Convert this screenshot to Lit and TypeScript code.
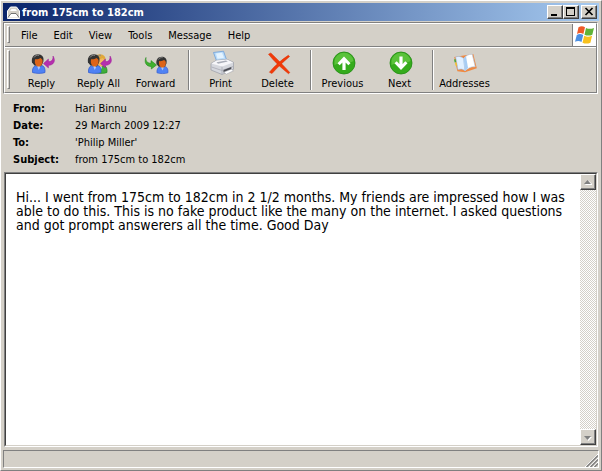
import { LitElement, html, css, svg, nothing } from "lit";
import { customElement, property } from "lit/decorators.js";

const person = (hair: string, face: string, coat: string, edge: string) => svg`
  <path d="M4.5 22.5c-.4-3.6 1-6.300 3-6.800l3.200 2 3.300-2.200c2.300.6 3.400 3.200 3 7-2.700 1.200-9.600 1.200-12.500 0z" fill=${coat} stroke=${edge} stroke-width=".7"/>
  <path d="M9.300 17l1.500 3 1.400-3z" fill="#a9c4ff"/>
  <path d="M4 12.500C3 7.500 5.800 4.300 10 4.300c4 0 6.300 2.900 5.300 7.400l-1.600 3.800H6.500z" fill=${hair}/>
  <path d="M7 9.200c1.800.4 4.200-.2 5.400-1.200 1.600.8 2.400 1.800 2.200 3.600-.2 3-1.900 5-3.900 5-2.200 0-3.700-2-3.900-4.600z" fill=${face}/>
  <path d="M6 7.500C7 5.600 9 5 11 5.300" fill="none" stroke="#8b8b8b" stroke-width="1"/>`;

const man = person("#333", "#dd6418", "#4f82f4", "#2f58cc");

const backArrow = svg`<path d="M25 6c3.300 5.200.3 9.300-4.600 9.300v2.600L15.500 13.600 20.400 9v2.600c3.400.2 4.900-2 4.600-5.600z" fill="#b52fae" stroke="#9a1c96" stroke-width=".5"/>`;

const icons: Record<string, unknown> = {
  reply: svg`${man}${backArrow}`,
  replyAll: svg`
    <g transform="translate(5 0)">${person("#e0a83c", "#f0b860", "#3fae3a", "#1f8a22")}</g>
    <g transform="translate(-1 0)">${man}</g>${backArrow}`,
  forward: svg`
    <g transform="translate(11 3) scale(.88)">${man}</g>
    <path d="M4 7.500c-.6 3.500 1.300 5.700 5 5.800v-2.700l5.500 4.400-5.200 4v-2.500C4.500 16.700 1.700 12.500 4 7.500z" fill="#3fb02f" stroke="#258a1c" stroke-width=".6"/>`,
  print: svg`
    <path d="M6.500 2.500l10-1.300 3.200 9-9.700 2z" fill="#b9dcfb" stroke="#6f9fd8" stroke-width=".8"/>
    <path d="M9 3.500l6-.8 2 5-6.500 1z" fill="#e4f3ff"/>
    <path d="M4 13.500l5.500-3.200 10.500-1 6.500 3v7L15 24.500 4 20z" fill="#d5d7dd" stroke="#9a9ca6" stroke-width=".7"/>
    <path d="M4.300 13.500l5.400-3 10.300-1 6.200 2.900-11 4.200z" fill="#f6f6f9"/>
    <path d="M9.500 12.200l9.500-1.700 1.800 1-9.800 2.200z" fill="#a9adb8"/>
    <path d="M15 16.700v7.500M4.500 17l10.500 3.500 11-4" fill="none" stroke="#a9abb5" stroke-width=".8"/>
    <path d="M16.500 20l7.800-3v2.500l-7.800 3z" fill="#4a4b52"/>
    <path d="M17 22l7.300-2.800 2.200 1.600-7.200 3.400z" fill="#fff" stroke="#9a9ca6" stroke-width=".5"/>`,
  remove: svg`
    <path d="M4.500 4.200L6.800 3c6 5.500 12.500 12.500 19 19.500l-1.300 1.200C18 18.500 10.500 12 4.500 4.200z" fill="#f23a08" stroke="#d82c00" stroke-width=".5"/>
    <path d="M24.300 5.300l1.300 1.200C19 12 13.500 17.500 8 23.500l-2.600-1.300C11 15.500 17.500 9.800 24.300 5.300z" fill="#f23a08" stroke="#d82c00" stroke-width=".5"/>`,
  previous: svg`
    <circle cx="15" cy="13" r="11" fill="#35ab1c" stroke="#1f8a12" stroke-width=".8"/>
    <path d="M5.500 11a9.600 9.600 0 0 1 19 0c-5 3.500-13 1-19 4z" fill="#6fce4c" opacity=".65"/>
    <path d="M15 6.500l6.500 6.700-2.200 2-2.700-2.700V20h-3.200v-7.500l-2.700 2.700-2.200-2z" fill="#fff"/>`,
  next: svg`
    <circle cx="15" cy="13" r="11" fill="#35ab1c" stroke="#1f8a12" stroke-width=".8"/>
    <path d="M5.500 11a9.600 9.600 0 0 1 19 0c-5 3.500-13 1-19 4z" fill="#6fce4c" opacity=".65"/>
    <path d="M15 20l6.500-6.700-2.200-2-2.700 2.700V6.500h-3.200V14l-2.700-2.700-2.200 2z" fill="#fff"/>`,
  addresses: svg`
    <path d="M3.200 7l3.200 14.300 7.600.9 11.800-4L22.300 4z" fill="#ee8a44"/>
    <path d="M4.700 7c3-1.200 5.800-.6 8 1.600l1.300 12.200c-2-1.800-4.300-2.200-7-1.200z" fill="#e2f0ff" stroke="#9cc0e8" stroke-width=".6"/>
    <path d="M12.700 8.600c2-3 5-4.400 8.500-4.400l3 12.500c-4-.4-7.200 1.300-10.200 4.100z" fill="#fff" stroke="#a9c8ea" stroke-width=".6"/>
    <path d="M12.700 8.600l1.300 12.200 3-3-2-11.500z" fill="#a8cdf4"/>
    <path d="M3 9.500l1.500-.4.700 3-1.500.4z" fill="#4aa83c"/><path d="M4 13l1.500-.4.700 3-1.500.4z" fill="#f2c430"/>`,
};

@customElement("tool-button")
class ToolButton extends LitElement {
  @property() icon = "";
  @property() label = "";
  static styles = css`
    .tool {
      display: flex;
      flex-direction: column;
      align-items: center;
      gap: 1px;
      width: 57px;
      height: 44px;
      padding: 2px 0 0;
      border: 0;
      background: none;
      font: 11px/14px "DejaVu Sans Condensed", Tahoma, sans-serif;
      color: #000;
      white-space: nowrap;
    }
    .icon { display: block; flex: none; width: 28px; height: 26px; }
  `;
  render() {
    return html`<button class="tool" type="button">
      <svg class="icon" viewBox="0 0 28 26" aria-hidden="true">${icons[this.icon]}</svg>
      <span>${this.label}</span>
    </button>`;
  }
}

const menus = ["File", "Edit", "View", "Tools", "Message", "Help"];
const toolGroups = [
  [["reply", "Reply"], ["replyAll", "Reply All"], ["forward", "Forward"]],
  [["print", "Print"], ["remove", "Delete"]],
  [["previous", "Previous"], ["next", "Next"]],
  [["addresses", "Addresses"]],
];
const headers = [
  ["From:", "Hari Binnu"],
  ["Date:", "29 March 2009 12:27"],
  ["To:", "'Philip Miller'"],
  ["Subject:", "from 175cm to 182cm"],
];

@customElement("app-root")
class AppRoot extends LitElement {
  static styles = css`
    :host {
      display: block;
      --face: #d4d0c8;
      --shadow: #808080;
      font: 11px/17px "DejaVu Sans Condensed", Tahoma, sans-serif;
      color: #000;
    }
    * { box-sizing: border-box; }
    button { font: inherit; color: inherit; }
    .window {
      display: flex;
      flex-direction: column;
      min-height: 100vh;
      padding: 2px;
      background: var(--face);
      border: 1px solid;
      border-color: #fff var(--shadow) var(--shadow) #fff;
    }
    .title {
      display: flex;
      align-items: center;
      height: 18px;
      padding: 0 2px 0 4px;
      background: linear-gradient(90deg, #0a246a, #a6caf0);
      color: #fff;
    }
    .mail { width: 13px; height: 13px; margin-right: 2px; }
    .caption { flex: 1; margin: 0; font-size: 11px; font-weight: bold; }
    .control {
      display: grid;
      width: 16px;
      height: 14px;
      padding: 0;
      background: var(--face);
      border: 1px solid;
      border-color: #fff #404040 #404040 #fff;
      box-shadow: inset -1px -1px var(--shadow);
    }
    .close { margin-left: 2px; }
    .glyph { width: 14px; height: 12px; }
    .bars { margin: 1px 1px 0 0; border: 1px solid; border-color: var(--shadow) #fff #fff var(--shadow); }
    .bars-inner { border: 1px solid; border-color: #fff var(--shadow) var(--shadow) #fff; }
    .menu-bar { display: flex; height: 22px; }
    .grip {
      flex: none;
      width: 3px;
      margin: 2px 3px 3px 2px;
      border: 1px solid;
      border-color: #fff var(--shadow) var(--shadow) #fff;
    }
    .menus { display: flex; flex: 1; }
    .menu { padding: 0 8px; border: 0; background: none; }
    .brand {
      display: grid;
      place-items: center;
      width: 24px;
      background: #fff;
      border-left: 1px solid var(--shadow);
    }
    .flag { width: 20px; height: 20px; }
    .tool-bar {
      display: flex;
      height: 46px;
      border-top: 1px solid var(--shadow);
      box-shadow: inset 0 1px #fff;
      padding-top: 1px;
    }
    .divider {
      width: 2px;
      margin: 2px 2px 2px 4px;
      border-left: 1px solid var(--shadow);
      border-right: 1px solid #fff;
    }
    .headers {
      display: grid;
      grid-template-columns: 62px 1fr;
      margin: 0;
      padding: 6px 10px 4px;
    }
    .headers dt { font-weight: bold; }
    .headers dd { margin: 0; }
    .pane {
      display: flex;
      flex: 1;
      margin: 0 1px 3px;
      background: #fff;
      border: 1px solid;
      border-color: var(--shadow) #fff #fff var(--shadow);
    }
    .pane-inner {
      display: flex;
      flex: 1;
      border: 1px solid;
      border-color: #404040 var(--face) var(--face) #404040;
    }
    .message { flex: 1; margin: 0; padding: 16px 4px 16px 10px; font: 14px/14px "DejaVu Sans Condensed", Verdana, sans-serif; }
    .scroll {
      display: flex;
      flex-direction: column;
      justify-content: space-between;
      width: 16px;
      background: repeating-conic-gradient(#fff 0 25%, var(--face) 0 50%) 0 0 / 2px 2px;
    }
    .arrow { height: 16px; }
    .arrow .glyph { height: 14px; }
    .status {
      display: flex;
      justify-content: flex-end;
      align-items: flex-end;
      height: 18px;
      border: 1px solid;
      border-color: var(--shadow) #fff #fff var(--shadow);
    }
    .resize { width: 13px; height: 13px; }
  `;

  render() {
    return html`<div class="window">
      <header class="title">
        <svg class="mail" viewBox="0 0 13 13" aria-hidden="true">
          <path d="M.5 5L3.500 1h6l3 4v7.500H.5z" fill="#d4d0c8" stroke="#fff"/>
          <path d="M3 5l1.500-2h4L10 5" fill="#fff"/>
          <path d="M1 11.500L4 7.500h5l3 4" fill="#fff" stroke="#555" stroke-width=".8"/>
        </svg>
        <h1 class="caption">from 175cm to 182cm</h1>
        <button class="control" type="button" aria-label="Minimize">
          <svg class="glyph" viewBox="0 0 14 12"><path d="M3 8h6v2H3z"/></svg>
        </button>
        <button class="control" type="button" aria-label="Maximize">
          <svg class="glyph" viewBox="0 0 14 12"><path d="M2 1h9v9H2zM3 3v6h7V3z" fill-rule="evenodd"/></svg>
        </button>
        <button class="control close" type="button" aria-label="Close">
          <svg class="glyph" viewBox="0 0 14 12"><path d="M3.500 2l7 7M10.500 2l-7 7" stroke="#000" stroke-width="1.700"/></svg>
        </button>
      </header>
      <div class="bars"><div class="bars-inner">
        <nav class="menu-bar">
          <span class="grip"></span>
          <div class="menus">${menus.map((m) => html`<button class="menu" type="button">${m}</button>`)}</div>
          <span class="brand">
            <svg class="flag" viewBox="0 0 20 20" aria-hidden="true">
              <path d="M3.500 2.200C5.700.8 8 .9 10 2.200L8.400 9C6.300 7.700 4.200 7.700 2 8.900z" fill="#ee5a28"/>
              <path d="M11 2.900c2.600 1.300 5 1.200 8 0L17.300 9.700c-2.700 1.200-5.200 1.200-7.800 0z" fill="#5fb336"/>
              <path d="M1.800 10C4 8.700 6.200 8.900 8.200 10.100L6.500 17C4.500 15.700 2.300 15.600 0 16.800z" fill="#4b8fe2"/>
              <path d="M9.200 10.800c2.600 1.300 5 1.200 7.900 0l-1.700 6.900c-2.800 1.200-5.300 1.200-7.900 0z" fill="#f7c11e"/>
            </svg>
          </span>
        </nav>
        <div class="tool-bar" role="toolbar">
          <span class="grip"></span>
          ${toolGroups.map((group, i) => html`
            ${i ? html`<span class="divider"></span>` : nothing}
            ${group.map(([icon, label]) => html`<tool-button icon=${icon} label=${label}></tool-button>`)}`)}
        </div>
      </div></div>
      <dl class="headers">
        ${headers.map(([name, value]) => html`<dt>${name}</dt><dd>${value}</dd>`)}
      </dl>
      <main class="pane"><div class="pane-inner">
        <p class="message">Hi... I went from 175cm to 182cm in 2 1/2 months. My friends are impressed how I was able to do this. This is no fake product like the many on the internet. I asked questions and got prompt answerers all the time. Good Day</p>
        <div class="scroll">
          <button class="control arrow" type="button" aria-label="Scroll up">
            <svg class="glyph" viewBox="0 0 14 14"><path d="M4 10h7V9L7.500 5.500z" fill="#fff"/><path d="M3 9h7L6.500 5z" fill="#808080"/></svg>
          </button>
          <button class="control arrow" type="button" aria-label="Scroll down">
            <svg class="glyph" viewBox="0 0 14 14"><path d="M4 7h7l-3.500 4z" fill="#fff"/><path d="M3 6h7L6.500 10z" fill="#808080"/></svg>
          </button>
        </div>
      </div></main>
      <footer class="status">
        <svg class="resize" viewBox="0 0 13 13" aria-hidden="true">
          <path d="M0 13L13 0M4 13l9-9M8 13l5-5" stroke="#fff"/>
          <path d="M1.500 13L13 1.500M5.500 13L13 5.500M9.500 13L13 9.500" stroke="#808080" stroke-width="1.500"/>
        </svg>
      </footer>
    </div>`;
  }
}
